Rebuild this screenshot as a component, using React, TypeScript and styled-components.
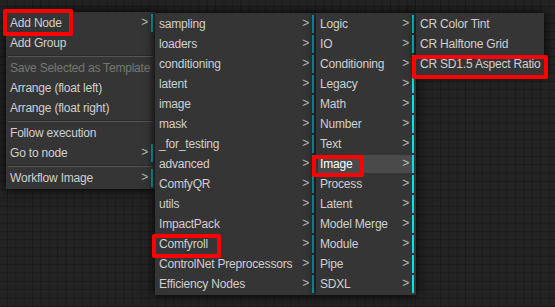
import React from "react";
import styled, { createGlobalStyle } from "styled-components";

const GlobalStyle = createGlobalStyle`
  html, body { margin: 0; padding: 0; background: #222; }
  * { box-sizing: border-box; }
`;

const Canvas = styled.div`
  position: relative;
  width: 555px;
  height: 307px;
  overflow: hidden;
  padding: 12px 0 0 6px;
  display: flex;
  align-items: flex-start;
  background-color: #232323;
  background-image:
    linear-gradient(#1b1b1b 1px, transparent 1px),
    linear-gradient(90deg, #1b1b1b 1px, transparent 1px);
  background-size: 8.333px 8.333px;
  background-position: 7px 6px;
  font-family: "Liberation Sans", Arial, sans-serif;
  font-size: 12px;
  letter-spacing: -0.2px;
`;

const Menu = styled.div<{ $width: number; $offset?: number }>`
  width: ${(p) => p.$width}px;
  margin-top: ${(p) => p.$offset ?? 0}px;
  flex: none;
  display: flex;
  flex-direction: column;
  gap: 2px;
  padding: 2px;
  background: #353535;
  box-shadow: 0 0 10px #000;
`;

const Entry = styled.div<{
  $submenu?: boolean;
  $disabled?: boolean;
  $active?: boolean;
  $bar?: string;
}>`
  height: 18px;
  line-height: 18px;
  display: flex;
  align-items: center;
  justify-content: space-between;
  padding: 0 3px 0 2px;
  white-space: nowrap;
  color: ${(p) => (p.$disabled ? "#777" : p.$active ? "#fff" : "#d0d0d0")};
  background: ${(p) => (p.$active ? "#4a4a4a" : "transparent")};
  border-right: 2px solid
    ${(p) => (p.$submenu ? p.$bar ?? "#00b4be" : "transparent")};
`;

const Arrow = styled.span`
  color: #bbb;
  font-size: 12px;
  line-height: 14px;
  margin-top: -3px;
`;

const Separator = styled.div`
  height: 2px;
  margin-top: 1px;
  border-top: 1px solid #2a2a2a;
  border-bottom: 1px solid #555;
`;

const Highlight = styled.div<{ $x: number; $y: number; $w: number; $h: number }>`
  position: absolute;
  left: ${(p) => p.$x}px;
  top: ${(p) => p.$y}px;
  width: ${(p) => p.$w}px;
  height: ${(p) => p.$h}px;
  border: 4px solid #ff0000;
  border-radius: 2px;
  pointer-events: none;
`;

type Item = { label: string; sub?: boolean; disabled?: boolean; active?: boolean } | "sep";

const menu1: Item[] = [
  { label: "Add Node", sub: true },
  { label: "Add Group" },
  "sep",
  { label: "Save Selected as Template", disabled: true },
  { label: "Arrange (float left)" },
  { label: "Arrange (float right)" },
  "sep",
  { label: "Follow execution" },
  { label: "Go to node", sub: true },
  "sep",
  { label: "Workflow Image", sub: true },
];

const menu2: Item[] = [
  "sampling",
  "loaders",
  "conditioning",
  "latent",
  "image",
  "mask",
  "_for_testing",
  "advanced",
  "ComfyQR",
  "utils",
  "ImpactPack",
  "Comfyroll",
  "ControlNet Preprocessors",
  "Efficiency Nodes",
].map((label) => ({ label, sub: true }));

const menu3: Item[] = [
  "Logic",
  "IO",
  "Conditioning",
  "Legacy",
  "Math",
  "Number",
  "Text",
  "Image",
  "Process",
  "Latent",
  "Model Merge",
  "Module",
  "Pipe",
  "SDXL",
].map((label) => ({ label, sub: true, active: label === "Image" }));

const menu4: Item[] = [
  { label: "CR Color Tint" },
  { label: "CR Halftone Grid" },
  { label: "CR SD1.5 Aspect Ratio" },
];

function MenuList({
  items,
  width,
  offset,
  bar,
}: {
  items: Item[];
  width: number;
  offset?: number;
  bar?: string;
}) {
  return (
    <Menu $width={width} $offset={offset}>
      {items.map((it, i) =>
        it === "sep" ? (
          <Separator key={i} />
        ) : (
          <Entry
            key={i}
            $submenu={it.sub}
            $disabled={it.disabled}
            $active={it.active}
            $bar={bar}
          >
            <span>{it.label}</span>
            {it.sub && <Arrow>&gt;</Arrow>}
          </Entry>
        )
      )}
    </Menu>
  );
}

export default function App() {
  return (
    <>
      <GlobalStyle />
      <Canvas>
        <MenuList items={menu1} width={149} bar="#00aab4" />
        <MenuList items={menu2} width={161} offset={1} bar="#00b4be" />
        <MenuList items={menu3} width={100} offset={1} bar="#00e0f0" />
        <MenuList items={menu4} width={128} offset={1} />
        <Highlight $x={3} $y={9} $w={70} $h={27} />
        <Highlight $x={152} $y={234} $w={69} $h={24} />
        <Highlight $x={312} $y={155} $w={52} $h={22} />
        <Highlight $x={412} $y={55} $w={136} $h={24} />
      </Canvas>
    </>
  );
}
